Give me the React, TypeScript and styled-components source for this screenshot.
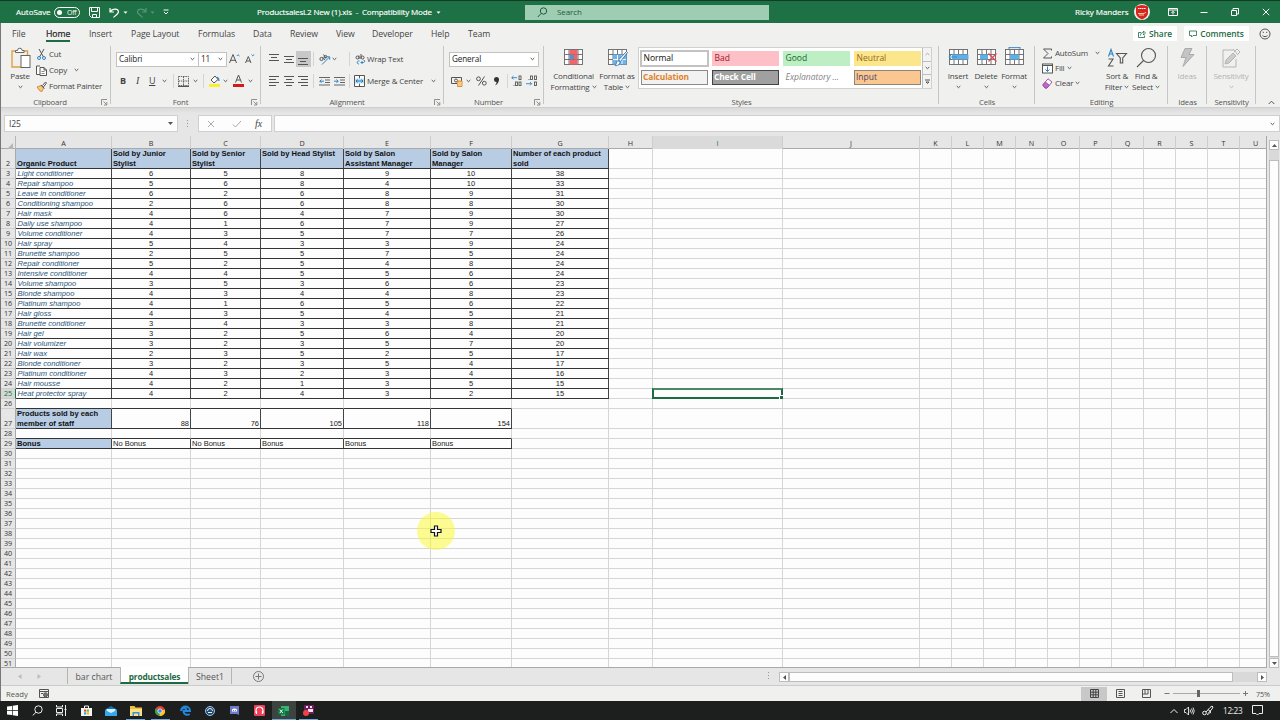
import type { ReactNode } from 'react';
import styled, { createGlobalStyle, css } from 'styled-components';

const Global = createGlobalStyle`
  * { box-sizing: border-box; }
  body { margin: 0; overflow: hidden; }
`;

const ui = `'Open Sans', 'Noto Sans', sans-serif`;
const arial = `'Liberation Sans', Arial, sans-serif`;

const Window = styled.div`
  position: relative; width: 1280px; height: 720px; overflow: hidden;
  display: flex; flex-direction: column;
  font: 8px/10px ${ui}; color: #444; background: #e6e6e6; white-space: nowrap;
  svg { display: block; flex: none; }
`;

/* ---------- title bar ---------- */
const TitleBar = styled.header`
  height: 23px; flex: none; display: flex; align-items: center;
  background: #1e7145; border-top: 1px solid #123a25; color: #fff; padding-left: 16px;
`;
const TitleText = styled.span<{ $w: number; $ml?: number; $tight?: boolean }>`
  width: ${p => p.$w}px; margin-left: ${p => p.$ml ?? 0}px; font-size: 8px;
  letter-spacing: ${p => (p.$tight ? -0.16 : -0.05)}px;
  -webkit-text-stroke: 0.15px #fff;
`;
const Toggle = styled.span`
  width: 26px; height: 11px; margin-left: 4px; border: 1px solid #fff; border-radius: 6px;
  display: flex; align-items: center; gap: 5px; padding-left: 2px; font-size: 7px; line-height: 9px; letter-spacing: -0.3px;
  &::before { content: ''; width: 5px; height: 5px; border-radius: 50%; background: #fff; }
`;
const TitleIcon = styled.span<{ $ml: number; $dim?: boolean }>`
  margin-left: ${p => p.$ml}px; opacity: ${p => (p.$dim ? 0.25 : 1)};
`;
const Search = styled.div`
  width: 244px; height: 15px; margin-left: 84px; padding-left: 12px; background: #9fcdb3; color: #1d5c3a;
  display: flex; align-items: center; gap: 9px; font-size: 8px; letter-spacing: -0.1px;
`;

/* ---------- tabs ---------- */
const TabRow = styled.nav`
  height: 21px; flex: none; display: flex; background: #f0f1ef; padding-left: 12px; font-size: 8.7px; letter-spacing: -0.08px;
`;
const Tab = styled.div<{ $w: number; $active?: boolean }>`
  width: ${p => p.$w}px; padding-top: 6px; line-height: 10px;
  span { display: inline-block; height: 13px; }
  ${p => p.$active && css`
    color: #222; -webkit-text-stroke: 0.2px #222;
    span { border-bottom: 2px solid #1e6b43; }
  `}
`;
const TabActions = styled.div`margin-left: auto; display: flex; align-items: center; padding: 0 9px 0 0;`;
const ActionBtn = styled.button<{ $w: number; $mr: number }>`
  width: ${p => p.$w}px; height: 15px; margin-right: ${p => p.$mr}px; padding: 0; border: 0; border-radius: 1px;
  background: #fff; color: #1e6b43; font: 600 8.4px/10px ${ui}; letter-spacing: -0.05px;
  display: flex; align-items: center; justify-content: center; gap: 3px;
`;

/* ---------- ribbon ---------- */
const Ribbon = styled.section`
  height: 64px; flex: none; display: flex; background: #f0f1ef; border-bottom: 1px solid #cfcfcf; letter-spacing: -0.2px;
`;
const Group = styled.div<{ $w: number }>`
  position: relative; width: ${p => p.$w}px; display: flex; flex-direction: column;
  &::after { content: ''; position: absolute; right: 0; top: 2px; height: 58px; width: 1px; background: #c6c6c6; }
`;
const GroupBody = styled.div<{ $pl?: number }>`height: 53px; display: flex; padding-left: ${p => p.$pl ?? 0}px;`;
const GroupLabel = styled.div<{ $launch?: boolean }>`
  height: 10px; display: flex; justify-content: center; align-items: center; color: #555; font-size: 7.8px;
  padding-right: ${p => (p.$launch ? 11 : 0)}px;
`;
const Launcher = styled.span`position: absolute; right: 3px; bottom: 1px;`;
const Stack = styled.div<{ $pt?: number; $ml?: number }>`
  display: flex; flex-direction: column; padding-top: ${p => p.$pt ?? 0}px; margin-left: ${p => p.$ml ?? 0}px;
`;
const Line = styled.div<{ $h?: number }>`height: ${p => p.$h ?? 16}px; display: flex; align-items: center;`;
const Item = styled.span<{ $w: number }>`width: ${p => p.$w}px; display: flex; align-items: center;`;
const BigButton = styled.div<{ $w: number; $dim?: boolean; $ml?: number }>`
  width: ${p => p.$w}px; margin-left: ${p => p.$ml ?? 0}px; padding-top: 3px;
  display: flex; flex-direction: column; align-items: center; line-height: 10.5px;
  ${p => p.$dim && 'color: #b3b3b3;'}
  > svg:first-child { height: 22px; margin-bottom: 2px; }
  > svg:last-child { margin-top: 3px; }
  div { display: flex; align-items: center; gap: 2px; }
`;
const Combo = styled.div<{ $w: number }>`
  width: ${p => p.$w}px; height: 15px; margin-right: -1px; padding: 0 3px 0 2px; border: 1px solid #c2c2c2; background: #fff;
  display: flex; align-items: center; justify-content: space-between; color: #222; font-size: 8.1px; letter-spacing: -0.1px;
`;
const Pressed = styled.span`
  width: 15px; height: 16px; background: #c8c8c8; display: flex; align-items: center; justify-content: center;
`;
const Divider = styled.span<{ $mr: number }>`width: 1px; height: 14px; background: #d4d4d4; margin-right: ${p => p.$mr}px;`;
const Glyph = styled.span<{ $w: number; $kind?: 'b' | 'i' | 'u' }>`
  width: ${p => p.$w}px; font-size: 9px;
  ${p => p.$kind === 'b' && 'font-weight: 700;'}
  ${p => p.$kind === 'i' && `font-style: italic; font-family: 'Liberation Serif', serif; font-size: 10px;`}
  ${p => p.$kind === 'u' && 'text-decoration: underline;'}
`;

const Gallery = styled.div`
  width: 294px; height: 42px; margin: 3px 0 0 2px; border: 1px solid #d0d0d0; background: #fff; display: flex; letter-spacing: 0;
`;
const Swatches = styled.div`
  width: 283px; display: grid; grid-template-columns: repeat(4, 67px); grid-auto-rows: 15px;
  gap: 4px; padding: 3px 0 0 2px;
`;
const Swatch = styled.div<{ $bg?: string; $fg: string; $edge?: string; $bold?: boolean; $italic?: boolean; $picked?: boolean }>`
  background: ${p => p.$bg ?? '#fff'}; color: ${p => p.$fg}; padding-left: 2.5px; line-height: 14px; font-size: 8.5px;
  ${p => p.$edge && `border: 1px solid ${p.$edge}; line-height: 12px; padding-left: 1px;`}
  ${p => p.$bold && 'font-weight: 700; font-size: 8.4px; letter-spacing: -0.12px;'}
  ${p => p.$italic && 'font-style: italic;'}
  ${p => p.$picked && 'box-shadow: inset 0 0 0 1px #c3c3c3, 0 0 0 1px #c3c3c3;'}
`;
const GalleryNav = styled.div`
  width: 9px; display: flex; flex-direction: column; border-left: 1px solid #bdbdbd; background: #f3f3f3;
  span { flex: 1; display: flex; align-items: center; justify-content: center; }
  span + span { border-top: 1px solid #bdbdbd; }
`;

/* ---------- formula bar ---------- */
const FormulaBar = styled.section`
  height: 28px; flex: none; display: flex; padding: 7px 0 0 4px;
  background: linear-gradient(#d9d9d9, #e6e6e6 5px);
`;
const Field = styled.div<{ $w: number; $ml?: number }>`
  width: ${p => p.$w}px; height: 17px; margin-left: ${p => p.$ml ?? 0}px; background: #fdfdfd; border: 1px solid #cfcfcf;
  display: flex; align-items: center; justify-content: space-between; padding: 0 4px; font-size: 8.5px; letter-spacing: -0.1px;
`;
const Dots = styled.span`
  width: 1px; height: 8px; background: repeating-linear-gradient(#999 0 1px, transparent 1px 3px);
`;

/* ---------- sheet ---------- */
const cols = [96, 79, 70, 83, 87, 81, 97, 44, 130, 137, 32, 32, 32, 32, 32, 32, 32, 32, 32, 32, 27];
const template = `15px ${cols.map(c => `${c}px`).join(' ')}`;

const SheetArea = styled.main`height: 532px; flex: none; display: flex; padding-left: 1px;`;
const Sheet = styled.div`width: 1266px; height: 532px; overflow: hidden; border-bottom: 1px solid #a9a9a9; border-right: 1px solid #a9a9a9;`;
const HeadRow = styled.div`
  display: grid; grid-template-columns: ${template}; height: 13px; border-bottom: 1px solid #a9a9a9;
  font-size: 7.2px; line-height: 15px; text-align: center; color: #333;
`;
const HeadCell = styled.div<{ $on?: boolean }>`
  border-right: 1px solid #cdcdcd;
  ${p => p.$on && 'background: #dadada; color: #1e6b43;'}
  &:last-child { padding-left: 4px; border-right: 0; }
`;
const Corner = styled.div`display: flex; justify-content: flex-end; align-items: flex-end; padding: 0 2px 2px 0; border-right: 1px solid #b5b5b5;`;
const Row = styled.div<{ $h: number }>`
  display: grid; grid-template-columns: ${template}; grid-template-rows: ${p => p.$h}px; height: ${p => p.$h}px;
`;
const RowHead = styled.div<{ $on?: boolean }>`
  display: flex; align-items: flex-end; justify-content: center; font-size: 7.2px; line-height: 9px; color: #333;
  background: #e6e6e6; border-right: 1px solid #a9a9a9; border-bottom: 1px solid #cdcdcd;
  ${p => p.$on && 'background: #d4d8d5; color: #1e6b43; border-right-color: #1e6b43;'}
`;
type CellKind = 'plain' | 'head' | 'name' | 'num' | 'total' | 'text';
const Cell = styled.div<{ $kind: CellKind; $under?: boolean }>`
  position: relative; display: flex; align-items: flex-end; padding: 0 1px;
  font: 7.5px/9px ${arial}; color: #222; background: #fdfdfd;
  border-right: 1px solid ${p => (p.$kind !== 'plain' ? '#444' : '#d6d6d6')};
  border-bottom: 1px solid ${p => (p.$under || p.$kind !== 'plain' ? '#333' : '#d6d6d6')};
  ${p => p.$kind === 'head' && css`
    align-items: flex-start; background: #b8cce4; font-weight: 700; font-size: 7.6px; line-height: 10px;
    color: #111; white-space: pre;
  `}
  ${p => p.$kind === 'name' && 'font-style: italic; color: #2b587c; font-size: 7.6px; padding-left: 1.5px;'}
  ${p => p.$kind === 'num' && 'justify-content: center;'}
  ${p => p.$kind === 'total' && 'justify-content: flex-end;'}
`;
const Selection = styled.div`
  position: absolute; inset: -1px; border: 2px solid #1e6b43; border-top-color: #4b8868;
  &::after { content: ''; position: absolute; right: -3px; bottom: -3px; width: 4px; height: 4px; background: #1e6b43; border: solid #fff; border-width: 1px 0 0 1px; }
`;

const VScroll = styled.div`width: 10px; margin: 4px 0 0 2px; height: 528px; display: flex; flex-direction: column; background: #d9d9d9;`;
const ScrollBtn = styled.span`
  width: 10px; height: 10px; flex: none; background: #fdfdfd; border: 1px solid #bdbdbd;
  display: flex; align-items: center; justify-content: center;
`;
const Thumb = styled.span<{ $w?: number; $h?: number }>`
  width: ${p => p.$w ?? 10}px; height: ${p => p.$h ?? 10}px; background: #fdfdfd; border: 1px solid #bdbdbd;
`;

/* ---------- bottom bars ---------- */
const SheetTabs = styled.div`height: 18px; flex: none; display: flex; padding-left: 18px; border-bottom: 1px solid #c9ccc9;`;
const Arrows = styled.span`width: 49px; display: flex; gap: 15px; padding-top: 6px;`;
const SheetTab = styled.div<{ $w: number; $active?: boolean }>`
  width: ${p => p.$w}px; text-align: center; font-size: 8.7px; line-height: 18px; height: 16px;
  border-left: 1px solid #b5b5b5; color: #555;
  ${p => p.$active && 'margin-top: -1px; height: 17px; line-height: 19px; background: #fff; color: #1e6b43; font-weight: 700; font-size: 8.3px; letter-spacing: -0.15px; border-bottom: 2px solid #1e6b43;'}
`;
const AddSheet = styled.span`margin: 3px 0 0 21px;`;
const HScroll = styled.div`margin: 4px 13px 0 auto; display: flex; align-items: flex-start; height: 10px;`;
const Track = styled.span`width: 24px; height: 10px; background: #d9d9d9;`;

const StatusBar = styled.footer`
  height: 15px; flex: none; display: flex; align-items: center; background: #f0f1ef; padding-left: 6px; color: #555; font-size: 7.7px;
`;
const ViewBtn = styled.span<{ $on?: boolean }>`
  width: 26px; height: 14px; display: flex; align-items: center; justify-content: center;
  ${p => p.$on && 'background: #c8c8c8;'}
`;
const Zoom = styled.div`display: flex; align-items: center; width: 118px; padding-left: 5px;`;
const Percent = styled.span`margin-left: 8px; font-size: 7.3px; letter-spacing: -0.2px;`;
const Slider = styled.span`
  position: relative; width: 67px; height: 1px; margin: 0 3px; background: #aaa;
  &::after { content: ''; position: absolute; left: 24px; top: -3px; width: 3px; height: 7px; background: #666; }
`;

const Taskbar = styled.div`
  height: 19px; flex: none; display: flex; background: #1c1f1d; color: #eee;
`;
const Task = styled.span<{ $open?: boolean; $active?: boolean }>`
  position: relative; width: 24.7px; height: 19px; display: flex; align-items: center; justify-content: center;
  ${p => p.$active && 'background: #3d4440;'}
  ${p => p.$open && css`
    &::after {
      content: ''; position: absolute; bottom: 0; height: 1px; background: #6fa5d8;
      left: ${p.$active ? 0 : 3}px; right: ${p.$active ? 0 : 3}px;
    }
  `}
`;
const Tray = styled.div`
  margin-left: auto; width: 110px; display: flex; align-items: center; font-size: 8.2px; letter-spacing: -0.3px;
`;
const TraySlot = styled.span<{ $w: number }>`width: ${p => p.$w}px;`;

const EdgeLine = styled.div`position: absolute; left: 0; top: 23px; width: 1px; height: 678px; background: #777;`;
const Pointer = styled.div`
  position: absolute; left: 417px; top: 512px; width: 38px; height: 38px; border-radius: 50%;
  background: rgba(250, 250, 40, 0.5); display: flex; align-items: center; justify-content: center;
`;

/* ---------- icons ---------- */
type IconProps = { w?: number; h?: number; c?: string; sw?: number; children: ReactNode };
const Icon = ({ w = 11, h = 11, c = '#555', sw = 1, children }: IconProps) => (
  <svg width={w} height={h} viewBox={`0 0 ${w} ${h}`} fill="none" stroke={c} strokeWidth={sw}>{children}</svg>
);
const Chevron = ({ c = '#555' }: { c?: string }) => <Icon w={5} h={4} c={c}><path d="M.7 1l1.8 1.700L4.300 1" /></Icon>;
const Tri = ({ d }: { d: 'up' | 'down' | 'left' | 'right' }) => {
  const paths = { up: 'M0 4h5L2.5 1z', down: 'M0 1h5L2.5 4z', left: 'M4 0v5L1 2.5z', right: 'M1 0v5l3-2.5z' };
  return <svg width={5} height={5} fill="#555"><path d={paths[d]} /></svg>;
};
const TitleTri = () => <svg width={5} height={5} fill="#fff"><path d="M.5 1.500h4l-2 2.200z" /></svg>;
const LaunchIcon = () => <Launcher><Icon w={7} h={7} c="#777" sw={0.8}><path d="M.5 6V.5H6M2.5 2.5l3 3M5.800 3v3H3" /></Icon></Launcher>;
const Lines = ({ rows, y = 1 }: { rows: [number, number][]; y?: number }) => (
  <Icon><path d={rows.map(([x, w], i) => `M${x} ${y + i * 3 + 0.5}h${w}`).join('')} /></Icon>
);
const TableBase = ({ children }: { children?: ReactNode }) => (
  <Icon w={21} h={22} c="#666" sw={0.9}>
    <rect x="1.5" y="2.500" width="18" height="15" fill="#fdfdfd" />
    <path d="M1.500 7.500h18M1.500 12.500h18M6 2.500v15M10.500 2.500v15M15 2.500v15" />
    {children}
  </Icon>
);
const PasteIcon = () => (
  <Icon w={21} h={22} c="#e0a040" sw={1.4}>
    <path d="M6 4H2v16h9M14 4h3.500v4" />
    <path d="M5.500 5.500V3.500h2a2.300 2.300 0 0 1 4.600 0h2v2z" fill="#fff" stroke="#666" strokeWidth="1" />
    <rect x="11" y="8.500" width="9" height="12" fill="#fff" stroke="#666" strokeWidth="1" />
  </Icon>
);
const CutIcon = () => (
  <Icon c="#555"><path d="M3 0l4.500 8M8 0L3.500 8" /><circle cx="3" cy="9" r="1.500" stroke="#2f83c5" /><circle cx="8" cy="9" r="1.500" stroke="#2f83c5" /></Icon>
);
const CopyIcon = () => (
  <Icon><path d="M4 1H.5v8.500H4M4 2.500h4l2.500 2.500v5.500H4zM8 2.500V5h2.500" fill="#fff" /><path d="M5.500 6.500h3M5.500 8.500h3" strokeWidth=".7" /></Icon>
);
const PainterIcon = () => (
  <Icon><path d="M1 6l4-1.500 2.500 2.500L6 10.500 4 10z" fill="#f3c88c" stroke="#e08a2c" /><path d="M5 4l3.500 3.500M6.500 4.500L9.500 1l1 1-3 4" fill="#fff" /></Icon>
);
const GridIcon = () => (
  <Icon w={11} h={11}><path d="M0 10.500h11" strokeWidth="1.200" /><path d="M.5.5h10v9H.5zM5.500.5v9M.5 5h10" strokeDasharray="1.500 .8" strokeWidth=".9" /></Icon>
);
const BucketIcon = () => (
  <Icon w={11} h={14}><path d="M2 6l4-4 3 3.500-4 3.500z" fill="#fff" /><path d="M8 3c2 1 2 3 2 4" stroke="#2f83c5" strokeWidth="1.300" /><path d="M0 11.500h11" stroke="#f7f031" strokeWidth="3" /></Icon>
);
const FontColorIcon = () => (
  <Icon w={11} h={14}><path d="M2.500 8.500L5.500 1l3 7.500M3.500 6h4" /><path d="M0 11.500h11" stroke="#d61a1a" strokeWidth="3" /></Icon>
);
const GrowIcon = ({ down }: { down?: boolean }) => (
  <Icon w={11} h={12}><path d={down ? 'M.5 10l2.800-6.500L6 10M1.500 8h3.600' : 'M.5 10L4 1.500 7.500 10M1.800 7.300h4.400'} /><path d={down ? 'M6.500 1.500l1.300 1.300L9.200 1.500' : 'M7.800 3l1.300-1.300L10.500 3'} stroke="#2f83c5" /></Icon>
);
const OrientIcon = () => (
  <Icon w={12} h={11}><circle cx="2.500" cy="5" r="1.600" /><path d="M3.500 3L6 6M4.500.5L7 4" /><circle cx="6.500" cy="2.700" r="1.300" /><path d="M3 10.500L10.500 3M7.800 2.800h2.900v2.900" stroke="#2f83c5" /></Icon>
);
const WrapIcon = () => (
  <Icon><circle cx="2.500" cy="3.500" r="1.500" /><path d="M4 1.500V5M6 0v5" /><circle cx="7.500" cy="3.500" r="1.500" /><path d="M4.500 7c-3-.5-3 3-.5 3M6 8.500h2.500c1.500 0 1.500-2.500 0-2.500M7.500 7L6 8.500 7.500 10" stroke="#2f83c5" /></Icon>
);
const MergeIcon = () => (
  <Icon w={11} h={12}><path d="M.5.5h10v11H.5z" fill="#fff" /><path d="M5.500.5v3M5.500 8.500v3" /><path d="M1 3.500h9v5H1z" fill="#bfe0f5" stroke="none" /><path d="M2 6h7M3.500 4.500L2 6l1.500 1.500M7.500 4.500L9 6 7.500 7.500" stroke="#1f77b4" /></Icon>
);
const IndentIcon = ({ out }: { out?: boolean }) => (
  <Icon><path d="M0 1.500h11M6 4h5M6 6.500h5M0 9h11" strokeWidth=".9" /><path d={out ? 'M5 5.200H.8M2.500 3.500L.8 5.200l1.700 1.700' : 'M0 5.200h4.200M2.500 3.500l1.700 1.700-1.700 1.700'} stroke="#2f83c5" /></Icon>
);
const MoneyIcon = () => (
  <Icon w={12} h={11}><path d="M.5 1.500h10v6H.5z" /><circle cx="5" cy="4.500" r="1.500" /><path d="M6.500 5h4.500v5.500H6.500z" fill="#f3b862" stroke="#d98f2b" /><path d="M6.500 7h4.500M6.500 9h4.500" stroke="#fff" strokeWidth=".5" /></Icon>
);
const DecimalIcon = ({ less }: { less?: boolean }) => (
  <Icon w={12} h={12} sw={0.9}>
    {less
      ? <><rect x="4.500" y="1" width="2" height="3.500" /><rect x="8.500" y="1" width="2" height="3.500" /><rect x="8.500" y="7" width="2" height="3.500" /><path d="M0 8.700h5.500M4 7l1.700 1.700L4 10.400" stroke="#2f83c5" /><path d="M2.500 4.500h1" /></>
      : <><rect x="8" y="1" width="2" height="3.500" /><rect x="4.500" y="7" width="2" height="3.500" /><rect x="8" y="7" width="2" height="3.500" /><path d="M6 2.700H.8M2.500 1L.8 2.700l1.700 1.700" stroke="#2f83c5" /><path d="M2.500 10.400h1" /></>}
  </Icon>
);

/* ---------- data ---------- */
const tabs: [string, number][] = [
  ['File', 34], ['Home', 43], ['Insert', 42], ['Page Layout', 67], ['Formulas', 55], ['Data', 37],
  ['Review', 46], ['View', 36], ['Developer', 59], ['Help', 37], ['Team', 30],
];
const headings = [
  '\nOrganic Product', 'Sold by Junior\nStylist', 'Sold by Senior\nStylist', 'Sold by Head Stylist',
  'Sold by Salon\nAssistant Manager', 'Sold by Salon\nManager', 'Number of each product\nsold',
];
const products: [string, ...number[]][] = [
  ['Light conditioner', 6, 5, 8, 9, 10, 38],
  ['Repair shampoo', 5, 6, 8, 4, 10, 33],
  ['Leave in conditioner', 6, 2, 6, 8, 9, 31],
  ['Conditioning shampoo', 2, 6, 6, 8, 8, 30],
  ['Hair mask', 4, 6, 4, 7, 9, 30],
  ['Daily use shampoo', 4, 1, 6, 7, 9, 27],
  ['Volume conditioner', 4, 3, 5, 7, 7, 26],
  ['Hair spray', 5, 4, 3, 3, 9, 24],
  ['Brunette shampoo', 2, 5, 5, 7, 5, 24],
  ['Repair conditioner', 5, 2, 5, 4, 8, 24],
  ['Intensive conditioner', 4, 4, 5, 5, 6, 24],
  ['Volume shampoo', 3, 5, 3, 6, 6, 23],
  ['Blonde shampoo', 4, 3, 4, 4, 8, 23],
  ['Platinum shampoo', 4, 1, 6, 5, 6, 22],
  ['Hair gloss', 4, 3, 5, 4, 5, 21],
  ['Brunette conditioner', 3, 4, 3, 3, 8, 21],
  ['Hair gel', 3, 2, 5, 6, 4, 20],
  ['Hair volumizer', 3, 2, 3, 5, 7, 20],
  ['Hair wax', 2, 3, 5, 2, 5, 17],
  ['Blonde conditioner', 3, 2, 3, 5, 4, 17],
  ['Platinum conditioner', 4, 3, 2, 3, 4, 16],
  ['Hair mousse', 4, 2, 1, 3, 5, 15],
  ['Heat protector spray', 4, 2, 4, 3, 2, 15],
];
const totals = ['Products sold by each\nmember of staff', 88, 76, 105, 118, 154];
const bonus = ['Bonus', 'No Bonus', 'No Bonus', 'Bonus', 'Bonus', 'Bonus'];
const rowNumbers = Array.from({ length: 50 }, (_, i) => i + 2);

function cellAt(row: number, col: number): { kind: CellKind; value?: string | number } {
  if (row === 2 && col < 7) return { kind: 'head', value: headings[col] };
  if (row >= 3 && row <= 25 && col < 7) return { kind: col === 0 ? 'name' : 'num', value: products[row - 3][col] };
  if (row === 27 && col < 6) return { kind: col === 0 ? 'head' : 'total', value: totals[col] };
  if (row === 29 && col < 6) return { kind: col === 0 ? 'head' : 'text', value: bonus[col] };
  return { kind: 'plain' };
}

function Title() {
  return (
    <TitleBar>
      <TitleText $w={34}>AutoSave</TitleText>
      <Toggle>Off</Toggle>
      <TitleIcon $ml={9}><Icon c="#fff"><path d="M.5.5h10v10h-8l-2-2zM2.500.5v4h6v-4M3.500 10.500v-3h4v3" /></Icon></TitleIcon>
      <TitleIcon $ml={9}><Icon c="#fff" sw={1.2}><path d="M1 1v4h4M1.200 4.800C3 1.500 9 1 9.500 4.500 9.800 7 6 8.500 4.500 10.500" /></Icon></TitleIcon>
      <TitleIcon $ml={3}><TitleTri /></TitleIcon>
      <TitleIcon $ml={8} $dim><Icon c="#fff" sw={1.2}><path d="M10 1v4H6M9.800 4.800C8 1.500 2 1 1.500 4.500 1.200 7 5 8.500 6.500 10.500" /></Icon></TitleIcon>
      <TitleIcon $ml={3} $dim><TitleTri /></TitleIcon>
      <TitleIcon $ml={8}><Icon w={6} h={6} c="#fff"><path d="M.5 1h5M1 3l2 2 2-2" /></Icon></TitleIcon>
      <TitleText $w={178} $ml={88} $tight>ProductsalesL2 New (1).xls&nbsp; -&nbsp; Compatibility Mode</TitleText>
      <TitleIcon $ml={1}><TitleTri /></TitleIcon>
      <Search>
        <Icon c="#1d5c3a"><circle cx="6.500" cy="4" r="3.200" /><path d="M4 6.500L.8 10" /></Icon>
        Search
      </Search>
      <TitleText $w={52} $ml={306}>Ricky Manders</TitleText>
      <TitleIcon $ml={7}>
        <svg width="16" height="16" viewBox="0 0 16 16">
          <circle cx="8" cy="8" r="8" fill="#eee" />
          <path d="M2 2.500q6-3 12 0v6c0 4-3 5.500-6 7-3-1.500-6-3-6-7z" fill="#d6261f" />
          <path d="M4 4.500h8" stroke="#fff" strokeWidth="1.200" strokeDasharray="1.500 .5" />
          <path d="M4 9.500h6l2-1.200M5 11h5" stroke="#f0c9a0" strokeWidth="1" fill="none" />
        </svg>
      </TitleIcon>
      <TitleIcon $ml={18}><Icon w={10} h={8} c="#fff"><path d="M.5.5h9v7h-9zM.5 2h9M5 6.500v-3M3.500 4.800L5 3.300l1.500 1.500" /></Icon></TitleIcon>
      <TitleIcon $ml={22}><Icon w={8} h={8} c="#fff"><path d="M.5 4.500h7" /></Icon></TitleIcon>
      <TitleIcon $ml={23}><Icon w={8} h={8} c="#fff"><path d="M.5 2.500h5v5h-5zM2 2.500v-2h5.500V6H6" /></Icon></TitleIcon>
      <TitleIcon $ml={23}><Icon w={8} h={8} c="#fff"><path d="M.8.8l6.400 6.400M7.200.8L.8 7.200" /></Icon></TitleIcon>
    </TitleBar>
  );
}

function RibbonBar() {
  return (
    <Ribbon>
      <Group $w={111}>
        <GroupBody $pl={9}>
          <BigButton $w={22}><PasteIcon /><div>Paste</div><Chevron /></BigButton>
          <Stack $pt={2} $ml={5}>
            <Line><Item $w={13}><CutIcon /></Item>Cut</Line>
            <Line><Item $w={13}><CopyIcon /></Item><Item $w={25}>Copy</Item><Chevron /></Line>
            <Line><Item $w={13}><PainterIcon /></Item>Format Painter</Line>
          </Stack>
        </GroupBody>
        <GroupLabel $launch>Clipboard</GroupLabel><LaunchIcon />
      </Group>

      <Group $w={150}>
        <GroupBody $pl={5}>
          <Stack $pt={4}>
            <Line $h={22}>
              <Combo $w={83}>Calibri<Chevron /></Combo><Combo $w={29}>11<Chevron /></Combo>
              <Item $w={3} /><Item $w={16}><GrowIcon /></Item><GrowIcon down />
            </Line>
            <Line $h={22}>
              <Item $w={4} />
              <Glyph $w={16} $kind="b">B</Glyph><Glyph $w={13} $kind="i">I</Glyph><Glyph $w={13} $kind="u">U</Glyph>
              <Item $w={11}><Chevron /></Item><Divider $mr={4} />
              <Item $w={15}><GridIcon /></Item><Item $w={10}><Chevron /></Item><Divider $mr={5} />
              <Item $w={14}><BucketIcon /></Item><Item $w={10}><Chevron /></Item>
              <Item $w={15}><FontColorIcon /></Item><Chevron />
            </Line>
          </Stack>
        </GroupBody>
        <GroupLabel $launch>Font</GroupLabel><LaunchIcon />
      </Group>

      <Group $w={183}>
        <GroupBody $pl={8}>
          <Stack $pt={4}>
            <Line $h={22}>
              <Item $w={15}><Lines rows={[[0, 10], [2, 6], [0, 10]]} y={0} /></Item>
              <Item $w={12}><Lines rows={[[0, 10], [2, 6], [0, 10]]} y={2} /></Item>
              <Pressed><Lines rows={[[0, 10], [2, 6], [0, 10]]} y={4} /></Pressed>
              <Item $w={2} /><Divider $mr={5} />
              <Item $w={13}><OrientIcon /></Item><Item $w={17}><Chevron /></Item><Divider $mr={5} />
              <Item $w={12}><WrapIcon /></Item>Wrap Text
            </Line>
            <Line $h={22}>
              <Item $w={15}><Lines rows={[[0, 10], [0, 7], [0, 10], [0, 7]]} y={0} /></Item>
              <Item $w={14}><Lines rows={[[0, 10], [2, 6], [0, 10], [2, 6]]} y={0} /></Item>
              <Item $w={15}><Lines rows={[[0, 10], [3, 7], [0, 10], [3, 7]]} y={0} /></Item>
              <Divider $mr={5} />
              <Item $w={15}><IndentIcon out /></Item><Item $w={15}><IndentIcon /></Item><Divider $mr={4} />
              <Item $w={13}><MergeIcon /></Item><Item $w={64}>Merge &amp; Center</Item><Chevron />
            </Line>
          </Stack>
        </GroupBody>
        <GroupLabel $launch>Alignment</GroupLabel><LaunchIcon />
      </Group>

      <Group $w={100}>
        <GroupBody $pl={5}>
          <Stack $pt={4}>
            <Line $h={22}><Combo $w={90}>General<Chevron /></Combo></Line>
            <Line $h={22}>
              <Item $w={2} /><Item $w={15}><MoneyIcon /></Item><Item $w={10}><Chevron /></Item>
              <Icon w={11} h={10}><circle cx="2.500" cy="2.800" r="1.900" /><circle cx="8.300" cy="7.200" r="1.900" /><path d="M8.500.5l-6 9" /></Icon>
              <Item $w={7} />
              <Item $w={13}><svg width="6" height="9"><path d="M0 2.500a2.500 2.500 0 0 1 5 0C5 5 3.500 7.500 1 8.500c1-1.300 1.500-2.300 1.500-3.500A2.500 2.500 0 0 1 0 2.500z" fill="#333" /></svg></Item>
              <Divider $mr={3} />
              <Item $w={15}><DecimalIcon /></Item><DecimalIcon less />
            </Line>
          </Stack>
        </GroupBody>
        <GroupLabel $launch>Number</GroupLabel><LaunchIcon />
      </Group>

      <Group $w={395}>
        <GroupBody $pl={5}>
          <BigButton $w={49}>
            <TableBase>
              <path d="M6.500 3h8v4.500h-8zM10.500 8h4v4.500h-4zM6.500 13h8v4.500h-8z" fill="#f0646a" stroke="none" />
              <path d="M6.500 8h4v4.500h-4z" fill="#5b8fd0" stroke="none" />
            </TableBase>
            <div>Conditional</div><div>Formatting <Chevron /></div>
          </BigButton>
          <BigButton $w={38}>
            <TableBase>
              <path d="M6 7.500h13.500v10H6z" fill="#6db3ea" stroke="none" />
              <path d="M6 12.500h13M10.500 8v9M15 8v9" stroke="#fff" />
              <path d="M19.500 4.500l1 1-7 9-2-1.500zM11 13.500l2 2c-1 3-3.500 3.500-5 3 1.500-1 1-3.500 3-5z" fill="#fff" stroke="#2f6fae" />
            </TableBase>
            <div>Format as</div><div>Table <Chevron /></div>
          </BigButton>
          <Gallery>
            <Swatches>
              <Swatch $fg="#111" $picked>Normal</Swatch>
              <Swatch $fg="#a01828" $bg="#fcc0c6">Bad</Swatch>
              <Swatch $fg="#14662c" $bg="#bdeec4">Good</Swatch>
              <Swatch $fg="#97691a" $bg="#fbe68c">Neutral</Swatch>
              <Swatch $fg="#e0822a" $bg="#f2f2f2" $edge="#8a8a8a" $bold>Calculation</Swatch>
              <Swatch $fg="#fff" $bg="#a0a0a0" $edge="#444" $bold>Check Cell</Swatch>
              <Swatch $fg="#7f7f7f" $italic>Explanatory ...</Swatch>
              <Swatch $fg="#4a4468" $bg="#fbc790" $edge="#8f8576">Input</Swatch>
            </Swatches>
            <GalleryNav>
              <span><Icon w={5} h={4} c="#aaa"><path d="M.7 3l1.800-1.700L4.300 3" /></Icon></span>
              <span><Chevron /></span>
              <span><Icon w={5} h={6}><path d="M0 1h5M1 3l1.500 1.500L4 3z" /></Icon></span>
            </GalleryNav>
          </Gallery>
        </GroupBody>
        <GroupLabel>Styles</GroupLabel>
      </Group>

      <Group $w={96}>
        <GroupBody $pl={5}>
          <BigButton $w={28}>
            <TableBase><path d="M4 7.500h16.500v5H4z" fill="#5fb0e8" stroke="none" /><path d="M9 10H.8M4 7l-3 3 3 3" stroke="#2f83c5" /></TableBase>
            <div>Insert</div><Chevron />
          </BigButton>
          <BigButton $w={28}>
            <TableBase><path d="M4 7.500h8v5H4z" fill="#5fb0e8" stroke="none" /><path d="M12.500 6.500l8 8M20.500 6.500l-8 8" stroke="#e0484e" strokeWidth="1.200" /></TableBase>
            <div>Delete</div><Chevron />
          </BigButton>
          <BigButton $w={28}>
            <TableBase><path d="M6 7.500h9v5H6z" fill="#5fb0e8" stroke="none" /><path d="M5 .6h11M5 0v2M16 0v2" stroke="#2f83c5" /></TableBase>
            <div>Format</div><Chevron />
          </BigButton>
        </GroupBody>
        <GroupLabel>Cells</GroupLabel>
      </Group>

      <Group $w={133}>
        <GroupBody $pl={7}>
          <Stack $pt={1}>
            <Line><Item $w={13}><Icon><path d="M9.500 2.500v-1.500H1.500L6 5.500l-4.500 4.500h8V8.500" /></Icon></Item><Item $w={40}>AutoSum</Item><Chevron /></Line>
            <Line $h={14}><Item $w={13}><Icon><rect x=".5" y="1" width="10" height="9" fill="#fff" /><path d="M.5 2.500h10" /><path d="M5.500 3.500v5M3.500 6.500l2 2 2-2" stroke="#2f83c5" /></Icon></Item><Item $w={12}>Fill</Item><Chevron /></Line>
            <Line><Item $w={13}><Icon c="#a24fb0"><path d="M.8 7L6 .8 10 4 5 10H3z" fill="#fff" /><path d="M.8 7l2.500-3 4 3.300L5 10H3z" fill="#b86cc4" /></Icon></Item><Item $w={20}>Clear</Item><Chevron /></Line>
          </Stack>
          <BigButton $w={28} $ml={3}>
            <Icon w={21} h={22} sw={1.1}>
              <path d="M1.500 9.500l2.500-7 2.500 7M2.500 7h3" stroke="#2f83c5" /><path d="M1.500 12h4.500L1.500 19h5" />
              <path d="M9.500 6.500h10l-3.800 4.500v5h-2.400v-5z" />
            </Icon>
            <div>Sort &amp;</div><div>Filter <Chevron /></div>
          </BigButton>
          <BigButton $w={30}>
            <Icon w={21} h={22} sw={1.1}><circle cx="12.500" cy="8.500" r="7" /><path d="M7.500 13.500L1 20" /></Icon>
            <div>Find &amp;</div><div>Select <Chevron /></div>
          </BigButton>
        </GroupBody>
        <GroupLabel>Editing</GroupLabel>
      </Group>

      <Group $w={39}>
        <GroupBody>
          <BigButton $w={38} $dim>
            <Icon w={16} h={22} c="#aaa"><path d="M6 1.500h7l-3 6h5L4 19.500l3-9H2z" fill="#c4c4c4" /></Icon>
            <div>Ideas</div>
          </BigButton>
        </GroupBody>
        <GroupLabel>Ideas</GroupLabel>
      </Group>

      <Group $w={49}>
        <GroupBody>
          <BigButton $w={48} $dim>
            <Icon w={20} h={22} c="#b5b5b5"><path d="M12 3H2v17h13v-8" /><path d="M5 13l7-7 3 3-7 7-4 1z" fill="#ccc" /><path d="M13 5l3-3 3 3-3 3M12 2l5 6" /></Icon>
            <div>Sensitivity</div><Chevron c="#b5b5b5" />
          </BigButton>
        </GroupBody>
        <GroupLabel>Sensitivity</GroupLabel>
      </Group>
      <Stack $pt={56} $ml={12}><Icon w={7} h={5}><path d="M.7 4l2.800-2.800L6.300 4" /></Icon></Stack>
    </Ribbon>
  );
}

function Grid() {
  return (
    <SheetArea>
      <Sheet>
        <HeadRow>
          <Corner><svg width="6" height="6" fill="#b5b5b5"><path d="M6 0v6H0z" /></svg></Corner>
          {cols.map((_, i) => <HeadCell key={i} $on={i === 8}>{String.fromCharCode(65 + i)}</HeadCell>)}
        </HeadRow>
        {rowNumbers.map(n => (
          <Row key={n} $h={n === 2 || n === 27 ? 20 : 10}>
            <RowHead $on={n === 25}>{n}</RowHead>
            {cols.map((_, c) => {
              const { kind, value } = cellAt(n, c);
              return (
                <Cell key={c} $kind={kind} $under={(n === 26 || n === 28) && c < 6}>
                  {value}
                  {n === 25 && c === 8 && <Selection />}
                </Cell>
              );
            })}
          </Row>
        ))}
      </Sheet>
      <VScroll>
        <ScrollBtn><Tri d="up" /></ScrollBtn>
        <Stack $pt={10}><Thumb $h={497} /></Stack>
        <Stack $pt={1}><ScrollBtn><Tri d="down" /></ScrollBtn></Stack>
      </VScroll>
    </SheetArea>
  );
}

function BottomBars() {
  return (
    <>
      <SheetTabs>
        <Arrows>
          <svg width="4" height="5" fill="#bbb"><path d="M3.500 0v5L0 2.500z" /></svg>
          <svg width="4" height="5" fill="#bbb"><path d="M.5 0v5L4 2.500z" /></svg>
        </Arrows>
        <SheetTab $w={53}>bar chart</SheetTab>
        <SheetTab $w={68} $active>productsales</SheetTab>
        <SheetTab $w={43}>Sheet1</SheetTab>
        <SheetTab $w={1} />
        <AddSheet><Icon c="#777"><circle cx="5.500" cy="5.500" r="5" /><path d="M5.500 2.500v6M2.500 5.500h6" /></Icon></AddSheet>
        <HScroll>
          <Item $w={11}><Dots /></Item>
          <ScrollBtn><Tri d="left" /></ScrollBtn><Thumb $w={444} /><Track /><ScrollBtn><Tri d="right" /></ScrollBtn>
        </HScroll>
      </SheetTabs>
      <StatusBar>
        <Item $w={33}>Ready</Item>
        <Icon w={10} h={9}><path d="M.5.5h9v8h-9zM.5 2.500h9M2 4.500h2" /><circle cx="6.500" cy="5.800" r="2" fill="#777" /></Icon>
        <Stack $ml={1032}><ViewBtn $on><Icon w={9} h={9} c="#444"><path d="M.5.5h8v8h-8zM3.200.5v8M5.800.5v8M.5 3.200h8M.5 5.800h8" /></Icon></ViewBtn></Stack>
        <ViewBtn><Icon w={9} h={9}><path d="M.5.5h8v8h-8z" /><path d="M2.500 2.500h4M2.500 4.500h4M2.500 6.500h4" /></Icon></ViewBtn>
        <ViewBtn><Icon w={9} h={9}><path d="M.5.5h8v8h-8zM3 .5v4.500M6 .5v4.500M.5 5h5.500" /></Icon></ViewBtn>
        <Zoom>
          <Icon w={6} h={7} c="#777"><path d="M.5 3.500h5" /></Icon><Slider />
          <Icon w={5} h={7} c="#777"><path d="M0 3.500h5M2.500 1v5" /></Icon>
          <Percent>75%</Percent>
        </Zoom>
      </StatusBar>
      <Taskbar>
        <Task><svg width="11" height="11" fill="#fff"><path d="M0 1.500L5 1v4.200H0zM5.700.8L11 0v5.200H5.700zM0 5.900h5v4.200L0 9.500zM5.700 5.900H11V11l-5.300-.8z" /></svg></Task>
        <Task><Icon c="#eee"><circle cx="6.500" cy="4.500" r="3.700" /><path d="M4 7.300L.7 10.500" /></Icon></Task>
        <Task><Icon c="#eee"><path d="M.5 0v2h6V0M.5 11V9h6v2M.5 3.500h6v4h-6zM9.500 0v11M8.500 4.500h2" /></Icon></Task>
        <Task><svg width="11" height="11"><path d="M0 3h11v8H0z" fill="#f4f4f4" /><path d="M3.500 3V1h4v2" fill="none" stroke="#f4f4f4" /><path d="M3 4.500h2.200v2.200H3z" fill="#e8502f" /><path d="M5.800 4.500H8v2.200H5.800z" fill="#7db72f" /><path d="M3 7.300h2.200v2.200H3z" fill="#2f9fe0" /><path d="M5.800 7.300H8v2.200H5.800z" fill="#f5b80f" /></svg></Task>
        <Task><svg width="12" height="10"><path d="M0 3.500L6 0l6 3.500V10H0z" fill="#1272b8" /><path d="M1.500 3h9v4h-9z" fill="#d8eefb" /><path d="M0 4l6 3 6-3v6H0z" fill="#31a9ec" /></svg></Task>
        <Task $open><svg width="12" height="10"><path d="M0 0h4.500l1 1.500H12V10H0z" fill="#f0bd3e" /><path d="M0 3h12v7H0z" fill="#fbe08a" /><path d="M2.500 6h7v4H8V7.500H4V10H2.500z" fill="#3e8fd0" /></svg></Task>
        <Task $open>
          <svg width="10" height="10" viewBox="0 0 10 10"><circle cx="5" cy="5" r="5" fill="#e5402f" /><path d="M5 5L.6 2.600A5 5 0 0 0 4.500 10z" fill="#34a652" /><path d="M5 5l4.900-1.500A5 5 0 0 1 4.500 10z" fill="#fbc516" /><circle cx="5" cy="5" r="2.200" fill="#4486f0" stroke="#fff" strokeWidth=".7" /></svg>
        </Task>
        <Task><Icon c="#2386dc" sw={2}><path d="M1 6c0-6 9-6 9 0H3.500c0 4 4 4.500 6.200 3M1 5C3 2 6 2.500 6.500 5.500" /></Icon></Task>
        <Task><svg width="10" height="10"><circle cx="5" cy="5" r="4.500" fill="#274a70" stroke="#9fc4e6" /><path d="M2.500 5a2.500 2.500 0 0 1 5 0M3 6.500h4" stroke="#e8f1fa" fill="none" /></svg></Task>
        <Task><svg width="9" height="9"><path d="M0 0h9v9L7 8H0z" fill="#6f79c9" /><path d="M2 3.500C3.500 2 5.500 2 7 3.500v2H2z" fill="#fff" /><path d="M3.500 4v1M5.500 4v1" stroke="#6f79c9" /></svg></Task>
        <Task><svg width="11" height="11"><rect width="11" height="11" rx="1" fill="#ee4058" /><path d="M2 8V5.500a3.500 3.500 0 0 1 7 0V8M2.500 6v3M8.500 6v3" stroke="#fff" fill="none" strokeWidth="1.200" /></svg></Task>
        <Task $open $active><svg width="11" height="10"><path d="M3 0h8v10H3z" fill="#33b27a" /><path d="M7 5h4v5H7z" fill="#17683f" /><path d="M0 2h6.500v6.500H0z" fill="#117a43" /><path d="M1.800 3.500l3 3.500M4.800 3.500l-3 3.500" stroke="#fff" /></svg></Task>
        <Task $open><svg width="11" height="11"><path d="M1 0h10v9H1z" fill="#6e1d60" /><path d="M3 1h2v2H3zM7 1h2v2H7zM5 4h5v3H5z" fill="#f2dcee" /><circle cx="3" cy="8" r="3" fill="#f04444" /></svg></Task>
        <Tray>
          <TraySlot $w={14}><Icon w={8} h={6} c="#eee"><path d="M.5 5L4 1.500 7.500 5" /></Icon></TraySlot>
          <TraySlot $w={18}><Icon w={11} h={10} c="#eee"><path d="M.5 3.500H2L4.500 1v8L2 6.500H.5zM6 3.500q1 1.500 0 3M7.500 2.500q2 2.500 0 5M9 1.500q2.500 3.500 0 7" strokeWidth=".9" /></Icon></TraySlot>
          <TraySlot $w={21}><Icon w={12} h={11} c="#eee"><circle cx="2.500" cy="8" r="1.800" /><path d="M4 7L8 2.500l2-1.500 1 1-1 2-4 4.500M5 9.500c2 0 2-2 4-2M6 4.500L9 7" /></Icon></TraySlot>
          <TraySlot $w={29}>12:23</TraySlot>
          <Icon w={11} h={11} c="#eee"><path d="M.5.5h10v8H7L5.500 10 4 8.500H.5z" /></Icon>
        </Tray>
      </Taskbar>
    </>
  );
}

export default function App() {
  return (
    <Window>
      <Global />
      <Title />
      <TabRow>
        {tabs.map(([name, w]) => <Tab key={name} $w={w} $active={name === 'Home'}><span>{name}</span></Tab>)}
        <TabActions>
          <ActionBtn $w={44} $mr={7}><Icon w={8} h={8} c="#1e6b43" sw={0.8}><path d="M3 2.500H.5v5h6V5.500M2.500 5.500c0-2 1-3 3-3V1l2 2-2 2V3.500" /></Icon>Share</ActionBtn>
          <ActionBtn $w={65} $mr={10}><Icon w={8} h={8} c="#1e6b43" sw={0.8}><path d="M.5 1h7v4.500H4L2.500 7V5.500h-2z" /></Icon>Comments</ActionBtn>
          <Icon w={12} h={12}><circle cx="6" cy="6" r="5" /><path d="M3.500 7.500c1 1.500 4 1.500 5 0M4.300 3.800v1.200M7.700 3.800v1.200" /></Icon>
        </TabActions>
      </TabRow>
      <RibbonBar />
      <FormulaBar>
        <Field $w={174}>I25<Tri d="down" /></Field>
        <Stack $pt={5} $ml={9}><Dots /></Stack>
        <Field $w={74} $ml={10}>
          <Icon w={16} h={8} c="#aaa"><path d="M5 1l6 6M11 1L5 7" /></Icon>
          <Icon w={11} h={8} c="#aaa"><path d="M1 4.500L3.500 7 9 1" /></Icon>
          <Glyph $w={12} $kind="i">fx</Glyph>
        </Field>
        <Field $w={1006} $ml={2}><span /><Chevron /></Field>
      </FormulaBar>
      <Grid />
      <BottomBars />
      <EdgeLine />
      <Pointer>
        <svg width="12" height="12"><path d="M4.500 1h3v3.500H11v3H7.500V11h-3V7.500H1v-3h3.500z" fill="#fff" stroke="#111" strokeWidth="1.200" /></svg>
      </Pointer>
    </Window>
  );
}
